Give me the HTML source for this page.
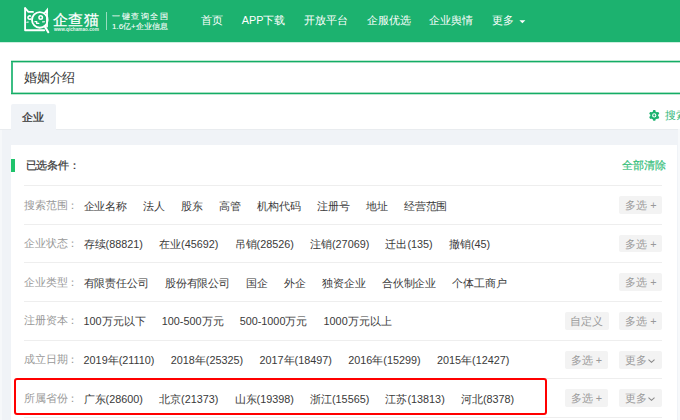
<!DOCTYPE html>
<html><head><meta charset="utf-8">
<style>
*{margin:0;padding:0;box-sizing:border-box}
html,body{width:680px;height:420px;overflow:hidden;background:#fff;font-family:"Liberation Sans",sans-serif;color:#333}
.abs{position:absolute}
#hdr{position:absolute;left:0;top:0;width:680px;height:42px;background:#1cb26f;box-shadow:0 1px 0 rgba(28,178,111,0.22)}
.nav{position:absolute;top:13px;font-size:10.82px;line-height:14px;color:#fff;white-space:nowrap}
#search{position:absolute;left:11px;top:60px;width:700px;height:35px;border-left:2px solid #3bbd83}
.hl{position:absolute;left:11px;width:669px;height:1px}
#search span{position:absolute;left:11.3px;top:9.5px;font-size:12.9px;line-height:16px;color:#333;letter-spacing:-0.35px}
#tab{position:absolute;left:11px;top:104px;width:44.6px;height:26px;z-index:2;background:#f0f3f7;border-radius:2px 2px 0 0}
#tab span{position:absolute;left:11.2px;top:5.5px;font-size:10.82px;line-height:14px;color:#333;letter-spacing:-0.2px;-webkit-text-stroke:0.3px #333}
#grey{position:absolute;left:0;top:129px;width:680px;height:291px;background:#f0f3f7;border-top:1px solid #e9ecef}
#card{position:absolute;left:11px;top:145px;width:665.5px;height:300px;background:#fff}
.sep{position:absolute;left:24.3px;width:638px;height:1px;background:#eeeeee}
.lab{position:absolute;left:24.1px;letter-spacing:-0.18px;font-size:10.82px;line-height:14px;color:#999;white-space:nowrap}
.vals{position:absolute;left:83.6px;font-size:10.82px;line-height:14px;color:#3a3a3a;white-space:nowrap}
.vals span{margin-right:16.2px}
.cj{letter-spacing:-0.18px}
.cj span{margin-right:16.4px}
.r5 span{margin-right:16.45px}
.btn{position:absolute;height:17.8px;background:#f3f3f3;border-radius:2px;font-size:10.82px;line-height:17.8px;padding-top:1px;color:#999;text-align:center;white-space:nowrap}
</style></head><body>
<div id="hdr">
  <svg class="abs" style="left:20px;top:4px" width="32" height="32" viewBox="0 0 32 32">
    <g fill="none" stroke="#fff" stroke-width="1.85" stroke-linecap="round" stroke-linejoin="round">
      <path d="M5.1 4.2 L8.4 7.9 L13 7.9"/>
      <path d="M5.1 4.2 L5.1 26.2 L24.2 26.2"/>
      <path d="M27 8.8 L27 22.6"/>
      <circle cx="19.8" cy="15.9" r="7.8"/>
      <path d="M24.9 22.6 L28.3 28.2" stroke-width="2.1"/>
      <path d="M10.4 12 a1.7 1.7 0 1 0 0.2 3" stroke-width="1.6"/>
      <circle cx="20.7" cy="13.5" r="1.75" stroke-width="1.5"/>
      <path d="M15 17.7 L16.8 17.7 L16.6 19.4 L18.8 19.4" stroke-width="1.3"/>
      <path d="M6.8 18.2 L8.3 18" stroke-width="1.1"/>
      <path d="M22.6 17.9 L24.6 17.7" stroke-width="1.1"/>
    </g>
    <path d="M23.4 9.1 L28 3.6 L28 9.1 Z" fill="#fff"/>
  </svg>
  <div class="abs" style="left:52.8px;top:10.5px;font-size:15.4px;line-height:18px;color:#fff;letter-spacing:0.5px;-webkit-text-stroke:0.25px #fff">企查猫</div>
  <div class="abs" style="left:54px;top:26.5px;font-size:4.6px;line-height:5px;color:#e8f8f0;letter-spacing:0.05px;font-weight:bold">www.qichamao.com</div>
  <div class="abs" style="left:105.5px;top:12.3px;width:1px;height:18px;background:rgba(255,255,255,0.55)"></div>
  <div class="abs" style="left:112px;top:12px;font-size:8px;line-height:10px;color:#fff;letter-spacing:1.6px;-webkit-text-stroke:0.08px #fff">一键查询全国</div>
  <div class="abs" style="left:112px;top:21.5px;font-size:8px;line-height:10px;color:#fff;-webkit-text-stroke:0.08px #fff">1.6亿+企业信息</div>
  <div class="nav" style="left:200.5px">首页</div>
  <div class="nav" style="left:241.8px">APP下载</div>
  <div class="nav" style="left:304.2px">开放平台</div>
  <div class="nav" style="left:366.5px">企服优选</div>
  <div class="nav" style="left:428.7px">企业舆情</div>
  <div class="nav" style="left:491.7px">更多</div>
  <svg class="abs" style="left:519px;top:19.8px" width="7" height="4" viewBox="0 0 7 4"><path d="M0.4 0.3 L6.4 0.3 L3.4 3.2Z" fill="#fff"/></svg>
</div>
<div id="search"><span>婚姻介绍</span></div>
<div class="hl" style="top:60px;background:#bfe8d3"></div><div class="hl" style="top:61px;background:#14ad66"></div><div class="hl" style="left:13px;top:62px;background:#a6dfc2"></div>
<div class="hl" style="left:13px;top:92px;background:#a6dfc2"></div><div class="hl" style="top:93px;background:#14ad66"></div><div class="hl" style="top:94px;background:#bfe8d3"></div>
<div id="tab"><span>企业</span></div>
<svg class="abs" style="left:648.9px;top:109.6px" width="11" height="11" viewBox="0 0 11 11">
  <g fill="#1cb26f"><circle cx="5.25" cy="5.4" r="3.9"/><rect x="3.95" y="0.10" width="2.6" height="3" rx="0.8" transform="rotate(0 5.25 5.4)"/><rect x="3.95" y="0.10" width="2.6" height="3" rx="0.8" transform="rotate(60 5.25 5.4)"/><rect x="3.95" y="0.10" width="2.6" height="3" rx="0.8" transform="rotate(120 5.25 5.4)"/><rect x="3.95" y="0.10" width="2.6" height="3" rx="0.8" transform="rotate(180 5.25 5.4)"/><rect x="3.95" y="0.10" width="2.6" height="3" rx="0.8" transform="rotate(240 5.25 5.4)"/><rect x="3.95" y="0.10" width="2.6" height="3" rx="0.8" transform="rotate(300 5.25 5.4)"/></g>
  <circle cx="5.25" cy="5.4" r="1.6" fill="none" stroke="#fff" stroke-width="1.1"/>
</svg>
<div class="abs" style="left:665.2px;top:107.5px;font-size:10.82px;line-height:14px;color:#34b77a;white-space:nowrap">搜索设置</div>
<div id="grey"></div>
<div id="card"></div>
<div class="abs" style="left:678px;top:129px;width:2px;height:291px;background:#f7f9fb"></div>
<div class="abs" style="left:0;top:130px;width:1.5px;height:290px;background:#f6f8fa"></div>
<div class="abs" style="left:11px;top:158.8px;width:4px;height:13px;background:#1fc36b"></div>
<div class="abs" style="left:25.6px;top:158px;font-size:10.82px;line-height:14px;color:#333;letter-spacing:-0.18px;-webkit-text-stroke:0.2px #333">已选条件：</div>
<div class="abs" style="left:622px;top:158px;font-size:10.82px;line-height:14px;color:#36c07a;letter-spacing:-0.15px;-webkit-text-stroke:0.2px #36c07a">全部清除</div>

<div class="sep" style="top:185px"></div>
<div class="lab" style="top:197.5px">搜索范围：</div>
<div class="vals cj" style="top:198.5px"><span>企业名称</span><span>法人</span><span>股东</span><span>高管</span><span>机构代码</span><span>注册号</span><span>地址</span><span>经营范围</span></div>
<div class="btn" style="left:619.3px;top:196.1px;width:43px">多选 +</div>

<div class="sep" style="top:223.6px"></div>
<div class="lab" style="top:236.1px">企业状态：</div>
<div class="vals" style="top:237.1px"><span>存续(88821)</span><span>在业(45692)</span><span>吊销(28526)</span><span>注销(27069)</span><span>迁出(135)</span><span>撤销(45)</span></div>
<div class="btn" style="left:619.3px;top:234.7px;width:43px">多选 +</div>

<div class="sep" style="top:262.3px"></div>
<div class="lab" style="top:274.8px">企业类型：</div>
<div class="vals cj" style="top:275.8px"><span>有限责任公司</span><span>股份有限公司</span><span>国企</span><span>外企</span><span>独资企业</span><span>合伙制企业</span><span>个体工商户</span></div>
<div class="btn" style="left:619.3px;top:273.4px;width:43px">多选 +</div>

<div class="sep" style="top:300.9px"></div>
<div class="lab" style="top:313.4px">注册资本：</div>
<div class="vals" style="top:314.4px"><span>100万元以下</span><span>100-500万元</span><span>500-1000万元</span><span>1000万元以上</span></div>
<div class="btn" style="left:565px;top:312px;width:43.5px">自定义</div>
<div class="btn" style="left:619.3px;top:312px;width:43px">多选 +</div>

<div class="sep" style="top:339.6px"></div>
<div class="lab" style="top:352.1px">成立日期：</div>
<div class="vals r5" style="top:353.1px"><span>2019年(21110)</span><span>2018年(25325)</span><span>2017年(18497)</span><span>2016年(15299)</span><span>2015年(12427)</span></div>
<div class="btn" style="left:564.6px;top:350.8px;width:43.5px">多选 +</div>
<div class="btn" style="left:619.3px;top:350.8px;width:43px"><span style="position:absolute;left:5.3px;top:1px;line-height:17.8px">更多</span><svg style="position:absolute;left:29.2px;top:8px" width="7" height="4" viewBox="0 0 7 4"><path d="M0.5 0.6 L3.5 3.3 L6.5 0.6" fill="none" stroke="#8a8a8a" stroke-width="1.1"/></svg></div>

<div class="sep" style="top:378.2px"></div>
<div class="lab" style="top:390.7px">所属省份：</div>
<div class="vals" style="top:391.7px"><span>广东(28600)</span><span>北京(21373)</span><span>山东(19398)</span><span>浙江(15565)</span><span>江苏(13813)</span><span>河北(8378)</span></div>
<div class="btn" style="left:564.6px;top:389.4px;width:43.5px">多选 +</div>
<div class="btn" style="left:619.3px;top:389.4px;width:43px"><span style="position:absolute;left:5.3px;top:1px;line-height:17.8px">更多</span><svg style="position:absolute;left:29.2px;top:8px" width="7" height="4" viewBox="0 0 7 4"><path d="M0.5 0.6 L3.5 3.3 L6.5 0.6" fill="none" stroke="#8a8a8a" stroke-width="1.1"/></svg></div>
<div class="sep" style="top:416.8px"></div>

<div class="abs" style="left:14.3px;top:378.3px;width:532.4px;height:37px;border:2.2px solid #f00;border-radius:3px"></div>
</body></html>
